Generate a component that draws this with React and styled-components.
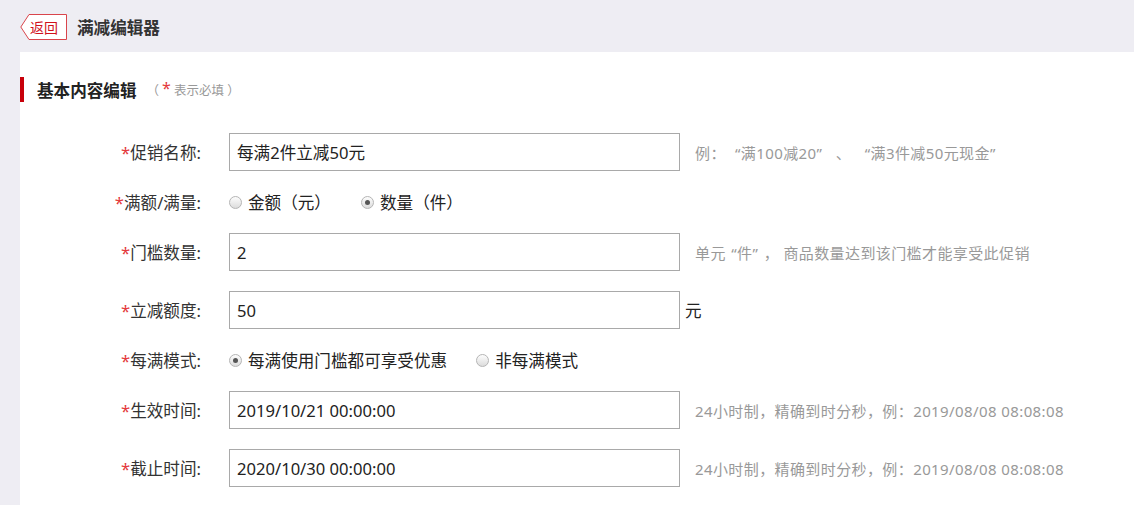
import React from 'react'
import styled, {createGlobalStyle} from 'styled-components'

const Global = createGlobalStyle`
	html, body {
		margin: 0;
		padding: 0;
		background: #eeedf3;
		font-family: "Noto Sans", "Noto Sans CJK SC", sans-serif;
		color: #333;
	}
	* { box-sizing: border-box; }
`

const Page = styled.div`
	width: 1134px;
	height: 505px;
	overflow: hidden;
	background: #eeedf3;
`

const Header = styled.div`
	height: 52px;
	display: flex;
	align-items: center;
	padding-left: 20px;
	padding-top: 1px;
`

const Back = styled.a`
	position: relative;
	width: 46px;
	height: 26px;
	display: flex;
	align-items: center;
	padding-left: 10px;
	color: #d0111b;
	font-size: 14px;
	cursor: pointer;

	svg {
		position: absolute;
		left: 0;
		top: 0;
	}
	span { position: relative; }
`

const Title = styled.h1`
	margin: 0 0 0 11px;
	font-size: 16.6px;
	font-weight: bold;
	color: #333;
`

const Panel = styled.div`
	margin-left: 20px;
	background: #fff;
	height: 453px;
	padding-top: 25px;
`

const Section = styled.div`
	display: flex;
	align-items: center;
	height: 25px;
	border-left: 4px solid #c8000a;
	padding-left: 13px;
	margin-bottom: 31px;
`

const SectionTitle = styled.span`
	font-size: 16.6px;
	font-weight: bold;
	color: #222;
`

const Note = styled.span`
	margin-left: 10px;
	font-size: 12.5px;
	color: #999;
	display: flex;
	align-items: center;
	gap: 3px;

	b {
		color: #e4393c;
		font-weight: normal;
		font-size: 16px;
		position: relative;
		top: -2px;
	}
`

const Row = styled.div`
	display: flex;
	align-items: center;
	height: ${({$tall}) => ($tall ? '38px' : '22px')};
	margin-bottom: 20px;
`

const Label = styled.label`
	width: 181px;
	text-align: right;
	font-size: 16.6px;
	color: #333;
	margin-right: 28px;
	white-space: nowrap;

	&::before {
		content: '*';
		color: #e4393c;
	}
`

const Input = styled.input`
	width: 451px;
	height: 38px;
	border: 1px solid #a9a9a9;
	padding: 0 7px;
	font-size: 16.6px;
	font-family: inherit;
	color: #222;
	outline: none;
`

const Hint = styled.span`
	margin-left: 15px;
	font-size: 15px;
	letter-spacing: 0.4px;
	color: #999;
	white-space: nowrap;
`

// quote mark set in a full-width cell, like the CJK glyph
const Quote = styled.span`
	display: inline-block;
	width: ${({$w}) => $w || '1em'};
	text-align: ${({$open}) => ($open ? 'right' : 'left')};
`

const Unit = styled.span`
	margin-left: 5px;
	font-size: 16.6px;
	color: #222;
`

const Radios = styled.div`
	display: flex;
	align-items: center;
	gap: ${({$gap}) => $gap || '38px'};
`

const Radio = styled.label`
	display: flex;
	align-items: center;
	font-size: 16.6px;
	color: #222;
	white-space: nowrap;
`

const Dot = styled.span`
	width: 13px;
	height: 13px;
	border-radius: 50%;
	border: 1px solid #b5b5b5;
	background: linear-gradient(#fdfdfd, #dcdcdc);
	margin-right: 6px;
	display: flex;
	align-items: center;
	justify-content: center;

	&::after {
		content: '';
		width: 5px;
		height: 5px;
		border-radius: 50%;
		background: ${({$on}) => ($on ? '#555' : 'transparent')};
	}
`

function Field({label, value, hint, unit}) {
	return (
		<Row $tall>
			<Label>{label}</Label>
			<Input defaultValue={value} />
			{hint && <Hint>{hint}</Hint>}
			{unit && <Unit>{unit}</Unit>}
		</Row>
	)
}

function Choice({label, options, gap}) {
	return (
		<Row>
			<Label>{label}</Label>
			<Radios $gap={gap}>
				{options.map((o) => (
					<Radio key={o.text}>
						<Dot $on={o.on} />
						{o.text}
					</Radio>
				))}
			</Radios>
		</Row>
	)
}

const open = (w) => <Quote $open $w={w}>“</Quote>
const close = (w) => <Quote $w={w}>”</Quote>

export default function App() {
	const timeHint = '24小时制，精确到时分秒，例：2019/08/08 08:08:08'
	return (
		<Page>
			<Global />
			<Header>
				<Back>
					<svg width="47" height="26" viewBox="0 0 47 26">
						<path d="M9 0.5 H46.5 V25.5 H9 L0.8 13 Z" fill="#fff" stroke="#d9444b" strokeWidth="1" />
					</svg>
					<span>返回</span>
				</Back>
				<Title>满减编辑器</Title>
			</Header>
			<Panel>
				<Section>
					<SectionTitle>基本内容编辑</SectionTitle>
					<Note>（<b>*</b>表示必填 ）</Note>
				</Section>
				<Field
					label="促销名称:"
					value="每满2件立减50元"
					hint={<>例：{open()}满100减20{close()}&nbsp;、&nbsp;{open()}满3件减50元现金{close()}</>}
				/>
				<Choice
					label="满额/满量:"
					gap="30px"
					options={[{text: '金额（元）'}, {text: '数量（件）', on: true}]}
				/>
				<Field
					label="门槛数量:"
					value="2"
					hint={<>单元{open('0.75em')}件{close('0.75em')}， 商品数量达到该门槛才能享受此促销</>}
				/>
				<Field label="立减额度:" value="50" unit="元" />
				<Choice
					label="每满模式:"
					gap="29px"
					options={[{text: '每满使用门槛都可享受优惠', on: true}, {text: '非每满模式'}]}
				/>
				<Field label="生效时间:" value="2019/10/21 00:00:00" hint={timeHint} />
				<Field label="截止时间:" value="2020/10/30 00:00:00" hint={timeHint} />
			</Panel>
		</Page>
	)
}
